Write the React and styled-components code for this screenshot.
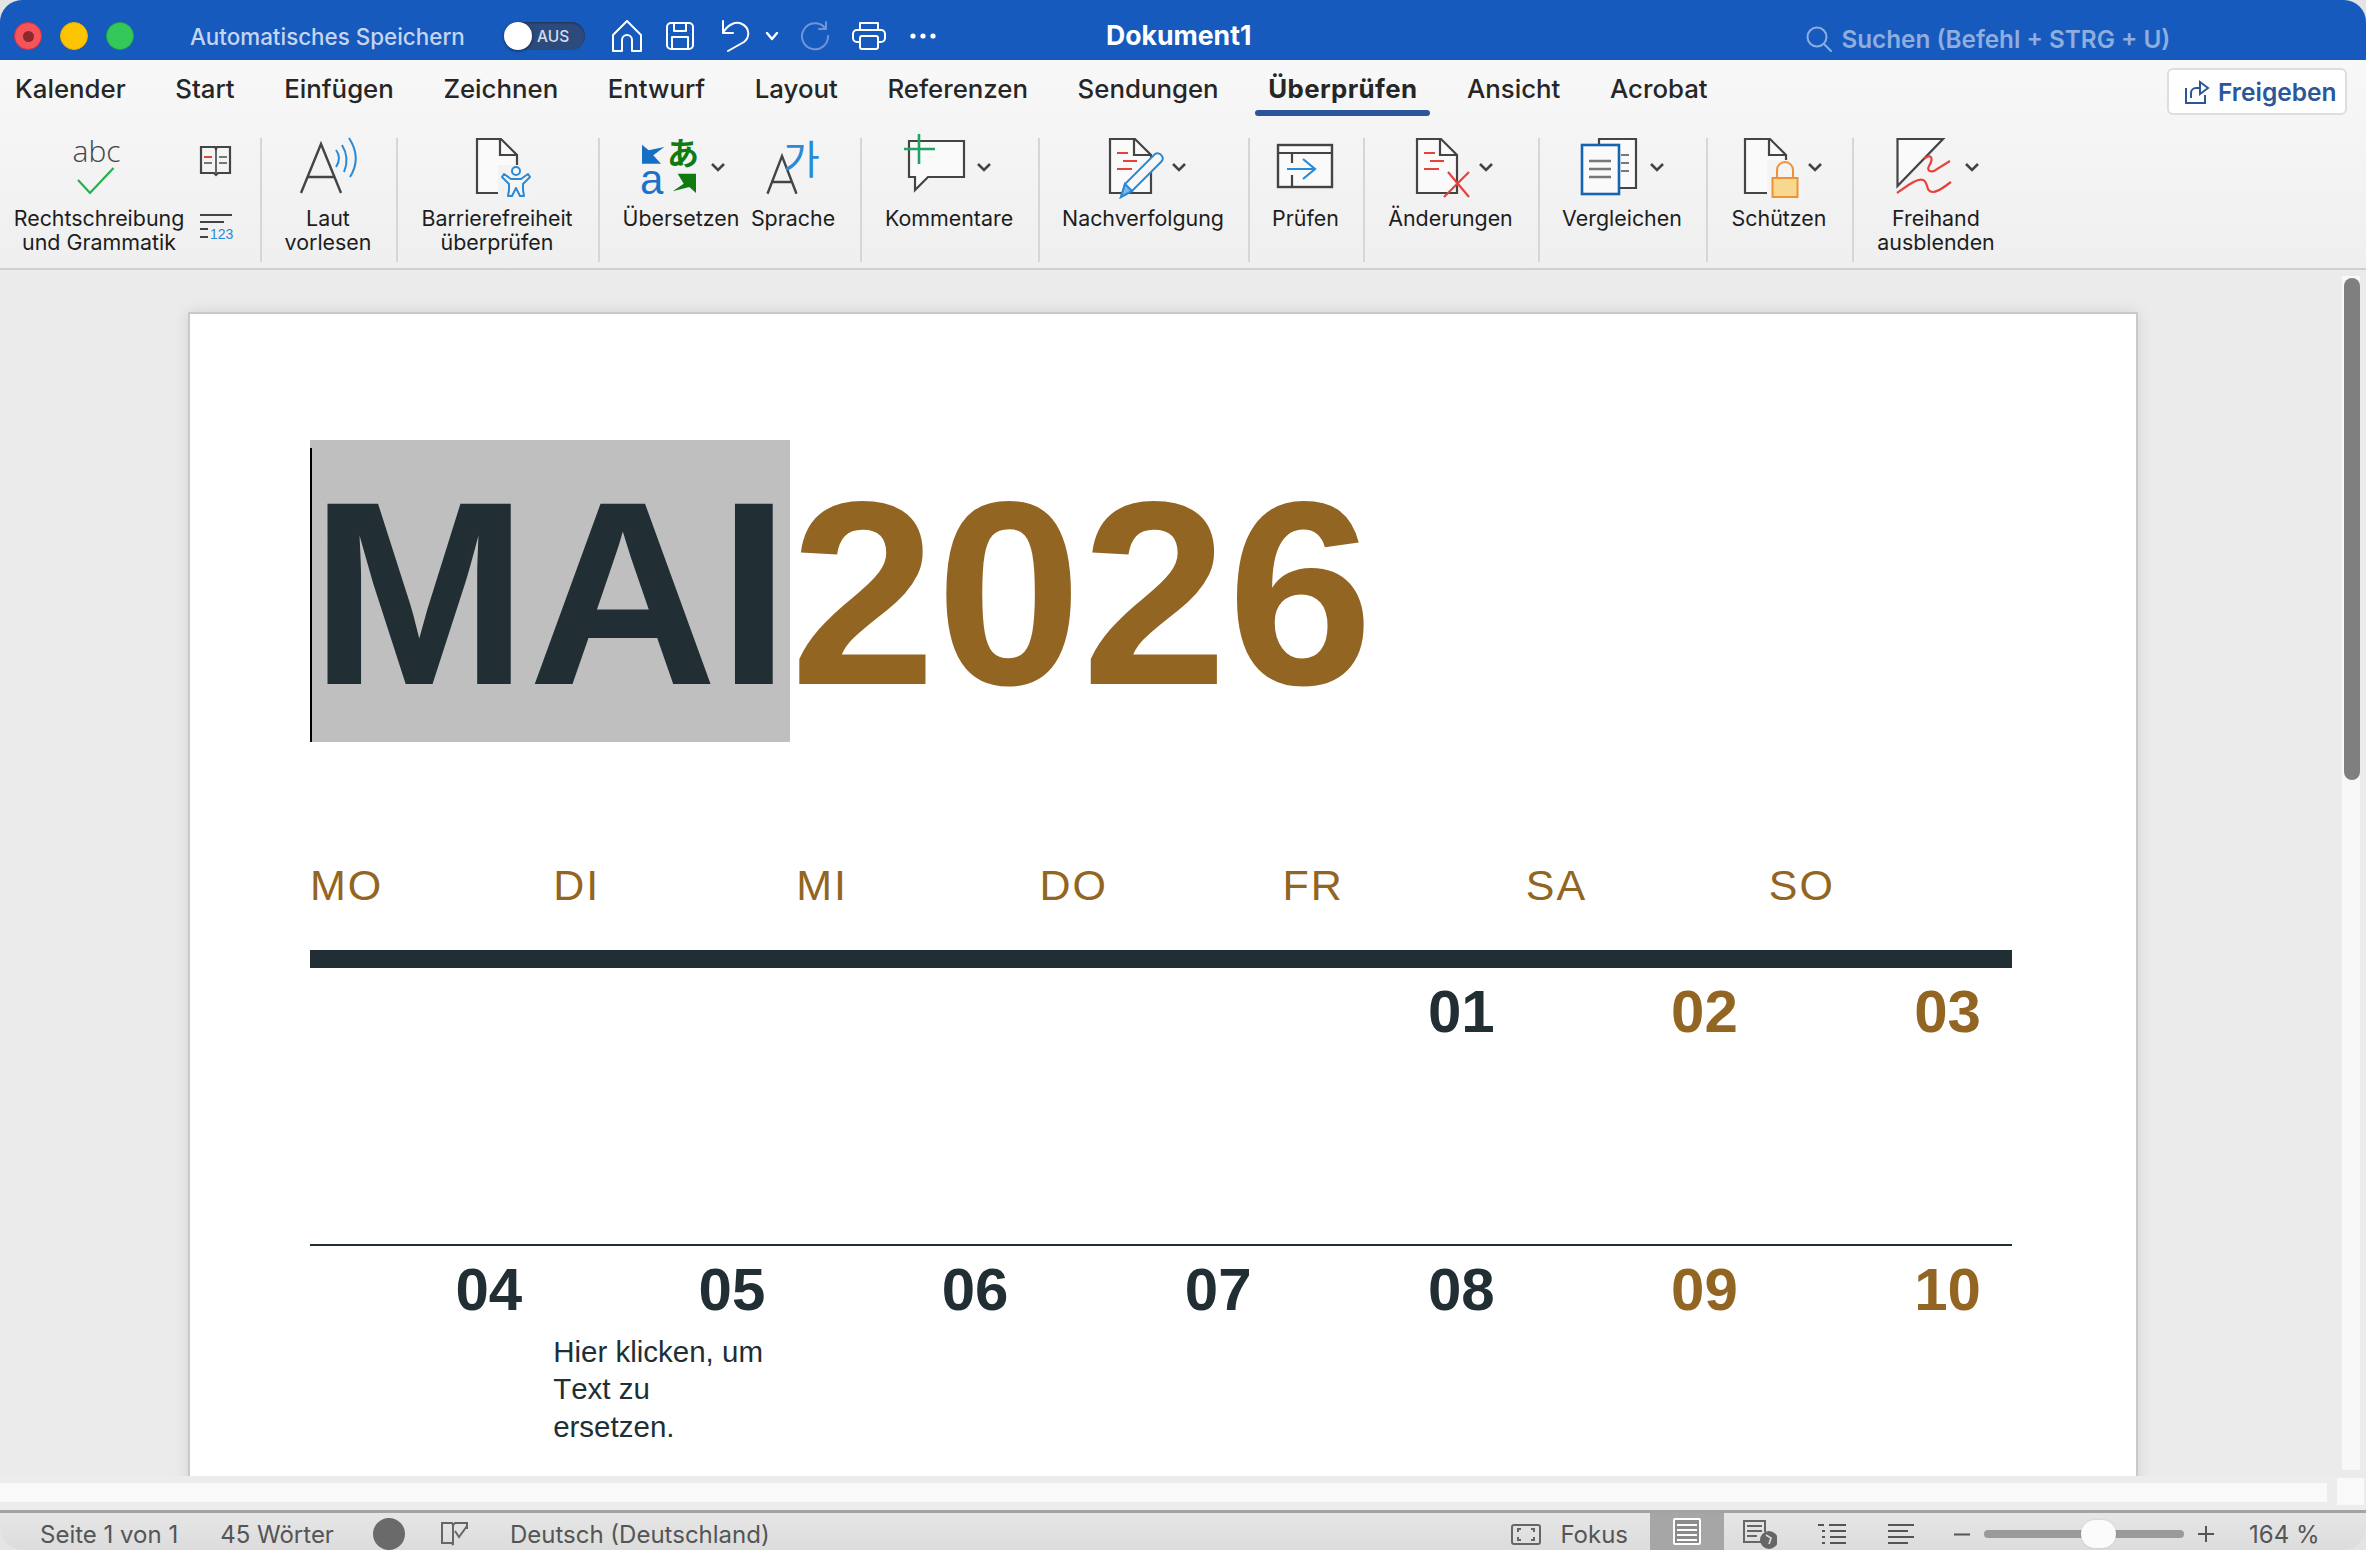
import React from "react";
import styled, { createGlobalStyle } from "styled-components";

const UI = `Inter, "Liberation Sans", sans-serif`;
const DOC = `"Liberation Sans", Arial, sans-serif`;
const INK = "#212f35";
const BROWN = "#936522";
const DARK = "#444";
const BLUE = "#2b8ad6";
const RED = "#e8413c";

const Global = createGlobalStyle`
  html, body { margin: 0; padding: 0; width: 2366px; height: 1550px; overflow: hidden; background: #e4e4e4; }
  * { box-sizing: border-box; }
  #root { width: 2366px; height: 1550px; }
`;

const Win = styled.div`
  width: 2366px; height: 1550px; display: flex; flex-direction: column;
  border-radius: 22px; overflow: hidden; font-family: ${UI}; background: #ececec;
`;

/* ---------- title bar ---------- */
const TitleBar = styled.header`
  flex: 0 0 60px; background: #175abd; display: flex; align-items: center; padding: 12px 0 0 14px;
`;
const LeftZone = styled.div`
  flex: 0 0 1092px; display: flex; align-items: center;
`;
const Light = styled.span`
  width: 28px; height: 28px; border-radius: 50%; margin-right: 18px; background: ${p => p.$c};
  border: 1px solid ${p => p.$b}; display: flex; align-items: center; justify-content: center;
`;
const LightDot = styled.span`
  width: 11px; height: 11px; border-radius: 50%; background: #8a2a2a;
`;
const AutoSave = styled.span`
  margin-left: 38px; font-size: 22.4px; font-weight: 500; color: #c6d4f0; white-space: nowrap; width: 274px;
`;
const Toggle = styled.div`
  margin-left: 40px; width: 81px; height: 28px; border-radius: 14px; background: #2d4a7c; display: flex; align-items: center;
  box-shadow: inset 0 1px 2px rgba(0,0,0,.35);
`;
const Knob = styled.span`
  width: 28px; height: 28px; border-radius: 50%; background: #fff; box-shadow: 0 1px 3px rgba(0,0,0,.5);
`;
const ToggleText = styled.span`
  margin-left: 5px; font-size: 15.5px; font-weight: 500; color: #d3dcec;
`;
const QuickIcon = styled.svg`
  display: block; margin-left: ${p => p.$ml}px; flex: none; fill: none; stroke: ${p => p.$c || "#fff"}; stroke-width: 2;
  stroke-linejoin: round; stroke-linecap: round;
`;
const DocTitle = styled.span`
  flex: 0 0 145px; font-size: 26.6px; font-weight: 700; color: #fff; white-space: nowrap; margin-top: -2px;
`;
const Search = styled.div`
  margin-left: 555px; display: flex; align-items: center; gap: 9px; margin-top: 6px; color: #8fadde; font-size: 24.3px; font-weight: 600; white-space: nowrap;
`;

/* ---------- ribbon ---------- */
const Ribbon = styled.section`
  flex: 0 0 210px; background: linear-gradient(#f8f8f8, #efefef); border-bottom: 2px solid #cfcfcf; display: flex; flex-direction: column;
`;
const TabRow = styled.nav`
  flex: 0 0 78px; display: flex; align-items: flex-start; padding-left: 15px; gap: 49.6px;
`;
const Tab = styled.span`
  position: relative; line-height: 58px; font-size: 25.8px; font-weight: ${p => (p.$active ? 700 : 500)}; color: #262626; white-space: nowrap;
  letter-spacing: ${p => (p.$active ? "0.4px" : "0")};
  ${p => p.$active && `
    &::after { content: ""; position: absolute; left: -13px; right: -13px; top: 50px; height: 6px; border-radius: 3px; background: #2b579a; }
  `}
`;
const Share = styled.button`
  margin: 8px 19px 0 auto; width: 180px; height: 47px; background: #fff; border: 2px solid #dedede; border-radius: 6px;
  display: flex; align-items: center; gap: 8px; padding: 0 0 0 16px; color: #2b579a; font: 600 24.5px ${UI};
`;
const Groups = styled.div`
  display: flex;
`;
const Label = styled.div`
  margin-top: 6px; font-size: 21.4px; line-height: 24px; text-align: center; color: #1d1d1d; white-space: nowrap;
`;
const Group = styled.div`
  flex: 0 0 ${p => p.$w}px; height: 124px; display: flex; justify-content: ${p => (p.$start ? "flex-start" : "center")};
  padding-left: ${p => p.$pl || 0}px; border-right: ${p => (p.$last ? "none" : "2px solid #d6d6d6")};
  ${p => !p.$start && `${Label} { margin-right: 2px; }`}
`;
const Tool = styled.div`
  display: flex; flex-direction: column; align-items: center;
`;
const Art = styled.svg`
  display: block; overflow: visible; fill: none; stroke-linecap: butt;
`;
const SmallCol = styled.div`
  display: flex; flex-direction: column; padding-top: 8px; gap: 38px;
`;

const Stage = ({ left, w, children }) => (
  <Art viewBox={`${left} 138 ${w} 62`} width={w} height={62}>{children}</Art>
);
const Page2 = ({ l, r }) => (
  <>
    <path d={`M${l} 139 H${r - 16} L${r} 155 V193 H${l} Z`} fill="#fafafa" stroke={DARK} strokeWidth="2.2" />
    <path d={`M${r - 17} 139 V155 H${r}`} fill="none" stroke={DARK} strokeWidth="2.2" />
  </>
);
const Chev = ({ x }) => (
  <path d={`M${x} 164 L${x + 6} 170 L${x + 12} 164`} stroke={DARK} strokeWidth="2.6" fill="none" />
);
const RedLines = ({ x }) => (
  <path d={`M${x} 153 H${x + 11} M${x + 6} 161 H${x + 20} M${x} 169 H${x + 15}`} stroke={RED} strokeWidth="2.2" fill="none" />
);

/* ---------- document ---------- */
const DocArea = styled.main`
  flex: 0 0 1206px; position: relative; overflow: hidden; background: #ebebeb; padding: 42px 0 0 188px;
`;
const Sheet = styled.article`
  width: 1950px; height: 1300px; background: #fff; border: 2px solid #c9c9c9; box-shadow: 0 0 14px rgba(0,0,0,.1);
  padding: 126px 0 0 120px; font-family: ${DOC}; font-kerning: none;
`;
const Heading = styled.h1`
  margin: 0; height: 302px; display: flex; align-items: flex-start; font: 700 262px/308px ${DOC}; white-space: nowrap;
`;
const Selected = styled.span`
  position: relative; height: 302px; background: #bfbfbf; color: ${INK};
  &::before { content: ""; position: absolute; left: 0; top: 8px; bottom: 0; width: 2px; background: #000; }
`;
const Year = styled.span`
  color: ${BROWN};
`;
const Weekdays = styled.div`
  margin-top: 118px; width: 1702px; display: grid; grid-template-columns: repeat(7, 1fr);
`;
const Weekday = styled.span`
  font-size: 43px; line-height: 50px; letter-spacing: 2px; color: ${BROWN};
`;
const Bar = styled.div`
  margin-top: 40px; width: 1702px; height: 18px; background: ${INK};
`;
const Week = styled.div`
  width: 1702px; height: ${p => p.$h}px; display: grid; grid-template-columns: repeat(7, 1fr);
  border-bottom: ${p => (p.$rule ? `2.5px solid ${INK}` : "none")};
`;
const Cell = styled.div`
  display: flex; flex-direction: column; padding-top: 12.5px;
`;
const DayNum = styled.span`
  min-height: 62px; font-size: 60px; line-height: 62px; font-weight: 700; text-align: right; padding-right: 31px; color: ${p => (p.$we ? BROWN : INK)};
`;
const Note = styled.p`
  margin: 12px 0 0; font-size: 29.5px; line-height: 37.5px; color: ${INK};
`;
const VTrack = styled.div`
  position: absolute; right: 6px; top: 6px; bottom: 6px; width: 18px; background: #f8f8f8; padding: 2px 0 0 2px;
`;
const VThumb = styled.div`
  width: 16px; height: 502px; border-radius: 8px; background: #7f7f7f;
`;
const HRow = styled.div`
  flex: 0 0 34px; background: #ececec; display: flex; align-items: flex-start; gap: 10px; padding-top: 7px;
`;
const HTrack = styled.div`
  flex: 0 0 2327px; height: 19px; background: #f9f9f9;
`;
const HCorner = styled.div`
  width: 27px; height: 27px; margin-top: -5px; background: #f9f9f9;
`;

/* ---------- status bar ---------- */
const Status = styled.footer`
  flex: 0 0 40px; border-top: 3px solid #a3a3a3; background: linear-gradient(#e6e6e6, #dcdcdc); display: flex; align-items: center;
  padding-left: 40px; color: #555; font-size: 24px;
`;
const StatusText = styled.span`
  margin-left: ${p => p.$ml || 0}px; white-space: nowrap; margin-top: 5px;
`;
const Dot = styled.span`
  margin: 5px 0 0 39px; width: 32px; height: 32px; border-radius: 50%; background: #6a6a6a; flex: none;
`;
const StatusIcon = styled.svg`
  display: block; flex: none; margin-left: ${p => p.$ml || 0}px; margin-top: ${p => p.$mt ?? 5}px; fill: none; stroke: ${p => p.$c || "#666"}; stroke-width: 2;
`;
const ViewOn = styled.div`
  margin-left: 22px; align-self: stretch; width: 74px; background: #a6a6a6; display: flex; align-items: center; justify-content: center;
`;
const RightSide = styled.div`
  margin-left: auto; display: flex; align-items: center; align-self: stretch; padding-right: 46.5px;
`;
const Track = styled.div`
  margin: 5px 0 0 14px; width: 200px; height: 8px; border-radius: 4px; background: #9a9a9a; position: relative; flex: none;
`;
const Thumb = styled.div`
  position: absolute; left: 97px; top: -10px; width: 35px; height: 28px; border-radius: 14px; background: #fbfbfb; box-shadow: 0 0 2px rgba(0,0,0,.15);
`;

const TABS = ["Kalender", "Start", "Einfügen", "Zeichnen", "Entwurf", "Layout", "Referenzen", "Sendungen", "Überprüfen", "Ansicht", "Acrobat"];
const DAYS = ["MO", "DI", "MI", "DO", "FR", "SA", "SO"];

export default function App() {
  return (
    <Win>
      <Global />
      <TitleBar>
        <LeftZone>
          <Light $c="#f4545a" $b="#e0303a"><LightDot /></Light>
          <Light $c="#fdc500" $b="#e8b000" />
          <Light $c="#34c85a" $b="#22a844" />
          <AutoSave>Automatisches Speichern</AutoSave>
          <Toggle><Knob /><ToggleText>AUS</ToggleText></Toggle>
          <QuickIcon $ml={27} width="30" height="32" viewBox="0 0 30 32"><path d="M1 15 L15 1 L29 15 V31 H20 V20 a5 5 0 0 0-10 0 V31 H1 Z" /></QuickIcon>
          <QuickIcon $ml={24} width="28" height="28" viewBox="0 0 28 28"><rect x="1" y="1" width="26" height="26" rx="4" /><path d="M8 1 V9 H20 V1 M6 27 V15 H22 V27" /></QuickIcon>
          <QuickIcon $ml={28} width="28" height="32" viewBox="0 0 28 32"><path d="M1 1 V13 H11 M1 13 C6 4 14 1 20 4 C28 8 28 17 22 22 L6 31" /></QuickIcon>
          <QuickIcon $ml={15} width="14" height="9" viewBox="0 0 14 9"><path d="M2 1 L7 7 L12 1" strokeWidth="2.4" /></QuickIcon>
          <QuickIcon $ml={22} $c="#6f95d4" width="28" height="30" viewBox="0 0 28 30"><path d="M24 7 A13 13 0 1 0 27 15 M25 1 V8 H18" /></QuickIcon>
          <QuickIcon $ml={23} width="34" height="28" viewBox="0 0 34 28"><path d="M8 8 V1 H26 V8 M8 20 H5 A4 4 0 0 1 1 16 V12 A4 4 0 0 1 5 8 H29 A4 4 0 0 1 33 12 V16 A4 4 0 0 1 29 20 H26" /><rect x="8" y="14" width="18" height="13" rx="2" /></QuickIcon>
          <QuickIcon $ml={24} width="26" height="6" viewBox="0 0 26 6"><g fill="#fff" stroke="none"><circle cx="3" cy="3" r="2.6" /><circle cx="13" cy="3" r="2.6" /><circle cx="23" cy="3" r="2.6" /></g></QuickIcon>
        </LeftZone>
        <DocTitle>Dokument1</DocTitle>
        <Search>
          <QuickIcon $ml={0} $c="#8fadde" width="26" height="26" viewBox="0 0 26 26"><circle cx="11" cy="11" r="9.5" /><path d="M18 18 L25 25" /></QuickIcon>
          Suchen (Befehl + STRG + U)
        </Search>
      </TitleBar>

      <Ribbon>
        <TabRow>
          {TABS.map(t => <Tab key={t} $active={t === "Überprüfen"}>{t}</Tab>)}
          <Share>
            <svg width="25" height="24" viewBox="0 0 25 24" fill="none" stroke="#2b579a" strokeWidth="2">
              <path d="M16 8 H11 A5 5 0 0 0 6 13 V18 M1 8 V23 H20 V15" />
              <path d="M15 2 L23 8 L15 14 Z" />
            </svg>
            Freigeben
          </Share>
        </TabRow>
        <Groups>
          <Group $w={262} $start>
            <Tool>
              <Stage left={0} w={198}>
                <text x="96.5" y="162" textAnchor="middle" fontFamily="'Open Sans', sans-serif" fontWeight="300" fontSize="30" fill={DARK}>abc</text>
                <path d="M78 180 L90 193 L113.5 168" stroke="#22b14c" strokeWidth="2.2" />
              </Stage>
              <Label>Rechtschreibung<br />und Grammatik</Label>
            </Tool>
            <SmallCol>
              <Art width="38" height="30" viewBox="198 146 38 30">
                <path d="M201 147 H215 L216 149 L217 147 H230 V173 H218 L216 175 L214 173 H201 Z" stroke={DARK} strokeWidth="2.2" />
                <path d="M216 149 V173" stroke={DARK} strokeWidth="1.6" />
                <path d="M204 157 H212" stroke={RED} strokeWidth="2.2" />
                <path d="M204 163 H212 M219 157 H227 M219 163 H227" stroke="#777" strokeWidth="2.2" />
              </Art>
              <Art width="38" height="26" viewBox="198 213 38 26">
                <path d="M200 214 H232 M200 221 H224 M200 228 H208 M200 236 H208" stroke={DARK} strokeWidth="2" />
                <text x="210" y="238" fontFamily="'Liberation Sans', sans-serif" fontSize="14" fill={BLUE}>123</text>
              </Art>
            </SmallCol>
          </Group>
          <Group $w={136}>
            <Tool>
              <Stage left={262} w={134}>
                <path d="M301 193 L321 144 L341 193 M307.5 177 H334.5" stroke={DARK} strokeWidth="2.4" />
                <path d="M336 150 Q342 158 336 167 M342 145 Q350 158 344 172 M349 138 Q362 158 350 177" stroke={BLUE} strokeWidth="2" />
              </Stage>
              <Label>Laut<br />vorlesen</Label>
            </Tool>
          </Group>
          <Group $w={202}>
            <Tool>
              <Stage left={398} w={200}>
                <Page2 l={477} r={517} />
                <path d="M498 165 H534 V199 H498 Z" fill="#f3f3f3" />
                <circle cx="516" cy="171" r="4" stroke={BLUE} strokeWidth="2" fill="#f6f6f6" />
                <path d="M504 174 L511 179 H521 L528 174 L530 177 L523 184 V190 L524 196 H520 L516 188 L512 196 H508 L509 190 V184 L502 177 Z" stroke={BLUE} strokeWidth="2" fill="#f6f6f6" strokeLinejoin="round" />
              </Stage>
              <Label>Barrierefreiheit<br />überprüfen</Label>
            </Tool>
          </Group>
          <Group $w={262} $start $pl={12}>
            <Tool>
              <Stage left={612} w={138}>
                <path d="M642 144.7 L648.7 150.3 L664.3 147 L653.3 155.3 L661 163.7 H642 Z" fill="#1570c4" />
                <text x="667" y="165" fontFamily="'Noto Sans CJK JP', sans-serif" fontWeight="700" fontSize="32" fill="#107c10">あ</text>
                <text x="640" y="194" fontFamily="'Liberation Sans', sans-serif" fontSize="42" fill="#1a73c8">a</text>
                <path d="M696 173.7 V193 L689.3 187 L672.7 191.3 L683.7 183.7 L677.7 173.7 Z" fill="#107c10" />
                <Chev x={712} />
              </Stage>
              <Label>Übersetzen</Label>
            </Tool>
            <Tool>
              <Stage left={750} w={86}>
                <path d="M767.5 193.7 L782 156 L796.5 193.7 M773 182 H791" stroke={DARK} strokeWidth="2.4" />
                <text x="783" y="174" fontFamily="'Noto Sans CJK KR', sans-serif" fontSize="40" fill={BLUE}>가</text>
              </Stage>
              <Label>Sprache</Label>
            </Tool>
          </Group>
          <Group $w={178}>
            <Tool>
              <Stage left={862} w={176}>
                <path d="M909 141 H964 V177 H928 L915 190 V177 H909 Z" fill="#fafafa" stroke={DARK} strokeWidth="2.2" />
                <path d="M904 149 H935 M919 134 V164" stroke="#21a366" strokeWidth="2.6" />
                <Chev x={978} />
              </Stage>
              <Label>Kommentare</Label>
            </Tool>
          </Group>
          <Group $w={210}>
            <Tool>
              <Stage left={1040} w={208}>
                <Page2 l={1110} r={1151} />
                <RedLines x={1117} />
                <path d="M1121 197 L1125 184 L1155 154 Q1159 152 1162 156 Q1164 159 1161 162 L1132 191 Z" fill="#f8f8f8" stroke={BLUE} strokeWidth="2" />
                <path d="M1121 197 L1125 184 L1132 191 Z" fill="#7db9ea" stroke={BLUE} strokeWidth="2" />
                <Chev x={1173} />
              </Stage>
              <Label>Nachverfolgung</Label>
            </Tool>
          </Group>
          <Group $w={115}>
            <Tool>
              <Stage left={1250} w={113}>
                <rect x="1278" y="145" width="54" height="42" fill="#fafafa" stroke={DARK} strokeWidth="2.4" />
                <path d="M1278 153 H1332 M1292 153 V163 M1292 175 V187" stroke={DARK} strokeWidth="2.2" />
                <path d="M1287 169 H1314 M1303 159 L1315 169 L1303 179" stroke={BLUE} strokeWidth="2.2" />
              </Stage>
              <Label>Prüfen</Label>
            </Tool>
          </Group>
          <Group $w={175}>
            <Tool>
              <Stage left={1365} w={173}>
                <Page2 l={1417} r={1457} />
                <RedLines x={1424} />
                <path d="M1444 197 L1469 172 M1448 172 L1469 197" stroke={RED} strokeWidth="2.2" />
                <Chev x={1480} />
              </Stage>
              <Label>Änderungen</Label>
            </Tool>
          </Group>
          <Group $w={168}>
            <Tool>
              <Stage left={1540} w={166}>
                <path d="M1599 144 V139 H1636 V188 H1619" fill="#fafafa" stroke={DARK} strokeWidth="2.2" />
                <path d="M1621 155 H1629 M1621 163 H1629 M1621 171 H1629" stroke="#777" strokeWidth="2.2" />
                <rect x="1582" y="145" width="37" height="49" fill="#fafafa" stroke="#1565b0" strokeWidth="2.6" />
                <path d="M1589 161 H1611 M1589 169 H1611 M1589 177 H1611" stroke="#777" strokeWidth="2.4" />
                <Chev x={1651} />
              </Stage>
              <Label>Vergleichen</Label>
            </Tool>
          </Group>
          <Group $w={146}>
            <Tool>
              <Stage left={1708} w={144}>
                <Page2 l={1745} r={1786} />
                <rect x="1767" y="160" width="36" height="38" fill="#f4f4f4" />
                <path d="M1777 178 V170 A7.5 7.5 0 0 1 1793 170 V178" stroke="#ef9235" strokeWidth="2" />
                <rect x="1772.5" y="178" width="25" height="19" fill="#f8d78f" stroke="#ef9235" strokeWidth="2" />
                <Chev x={1809} />
              </Stage>
              <Label>Schützen</Label>
            </Tool>
          </Group>
          <Group $w={166} $last>
            <Tool>
              <Stage left={1854} w={164}>
                <path d="M1896.5 139 H1942 L1896.5 186 Z" fill="#fafafa" stroke={DARK} strokeWidth="2.2" />
                <path d="M1923 159 C1930 153 1933 158 1928 166 C1925 172 1932 173 1936 169 L1949 161" stroke={RED} strokeWidth="2.2" />
                <path d="M1896 193 C1906 186 1916 178 1922 180 C1928 182 1924 192 1932 192 C1938 192 1944 186 1950 182" stroke={RED} strokeWidth="2.2" />
                <Chev x={1965} />
              </Stage>
              <Label>Freihand<br />ausblenden</Label>
            </Tool>
          </Group>
        </Groups>
      </Ribbon>

      <DocArea>
        <Sheet>
          <Heading><Selected>MAI</Selected><Year>2026</Year></Heading>
          <Weekdays>{DAYS.map(d => <Weekday key={d}>{d}</Weekday>)}</Weekdays>
          <Bar />
          <Week $h={278} $rule>
            {[0, 1, 2, 3, 4].map(i => <Cell key={i}><DayNum>{i === 4 ? "01" : ""}</DayNum></Cell>)}
            <Cell><DayNum $we>02</DayNum></Cell>
            <Cell><DayNum $we>03</DayNum></Cell>
          </Week>
          <Week $h={260}>
            <Cell><DayNum>04</DayNum></Cell>
            <Cell><DayNum>05</DayNum><Note>Hier klicken, um<br />Text zu<br />ersetzen.</Note></Cell>
            <Cell><DayNum>06</DayNum></Cell>
            <Cell><DayNum>07</DayNum></Cell>
            <Cell><DayNum>08</DayNum></Cell>
            <Cell><DayNum $we>09</DayNum></Cell>
            <Cell><DayNum $we>10</DayNum></Cell>
          </Week>
        </Sheet>
        <VTrack><VThumb /></VTrack>
      </DocArea>
      <HRow><HTrack /><HCorner /></HRow>

      <Status>
        <StatusText>Seite 1 von 1</StatusText>
        <StatusText $ml={42}>45 Wörter</StatusText>
        <Dot />
        <StatusIcon $ml={36} width="27" height="26" viewBox="0 0 27 26" strokeWidth="1.5">
          <path d="M1 2 H11 L12 4 V24 L11 22 H1 Z M12 4 L14 2 H26 V8" />
          <path d="M14 10 L18 16 L26 5" />
        </StatusIcon>
        <StatusText $ml={42}>Deutsch (Deutschland)</StatusText>
        <RightSide>
          <StatusIcon width="30" height="21" viewBox="0 0 30 21">
            <rect x="1" y="1" width="28" height="19" rx="2" />
            <path d="M7 8 V5 H10 M20 5 H23 V8 M7 13 V16 H10 M20 16 H23 V13" />
          </StatusIcon>
          <StatusText $ml={19}>Fokus</StatusText>
          <ViewOn>
            <svg width="28" height="27" viewBox="0 0 28 27" fill="#8c8c8c" stroke="#fff" strokeWidth="2">
              <rect x="1" y="1" width="26" height="25" rx="1" />
              <path d="M4 7 H24 M4 12 H24 M4 17 H24 M4 22 H24" />
            </svg>
          </ViewOn>
          <StatusIcon $ml={19} width="34" height="29" viewBox="0 0 34 29">
            <path d="M21 22 H1 V1 H22 V12" />
            <path d="M4 6 H19 M4 11 H19 M4 16 H14" />
            <circle cx="26" cy="20" r="8" fill="#666" />
            <path d="M23 15 L28 18 L26 24" stroke="#ddd" strokeWidth="1.6" />
          </StatusIcon>
          <StatusIcon $ml={39} width="31" height="22" viewBox="0 0 31 22" $c="#555">
            <path d="M2 2 H8 M13 2 H30 M6 8 H9 M14 8 H30 M6 14 H9 M14 14 H30 M6 20 H9 M14 20 H30" />
          </StatusIcon>
          <StatusIcon $ml={41} width="26" height="22" viewBox="0 0 26 22" $c="#555">
            <path d="M0 2 H26 M0 8 H20 M0 14 H26 M0 20 H20" />
          </StatusIcon>
          <StatusIcon $ml={40} width="16" height="5" viewBox="0 0 16 5" $c="#555" strokeWidth="5"><path d="M0 2.5 H16" /></StatusIcon>
          <Track><Thumb /></Track>
          <StatusIcon $ml={14} width="16" height="16" viewBox="0 0 16 16" $c="#555" strokeWidth="3.4"><path d="M0 8 H16 M8 0 V16" /></StatusIcon>
          <StatusText $ml={35}>164 %</StatusText>
        </RightSide>
      </Status>
    </Win>
  );
}
